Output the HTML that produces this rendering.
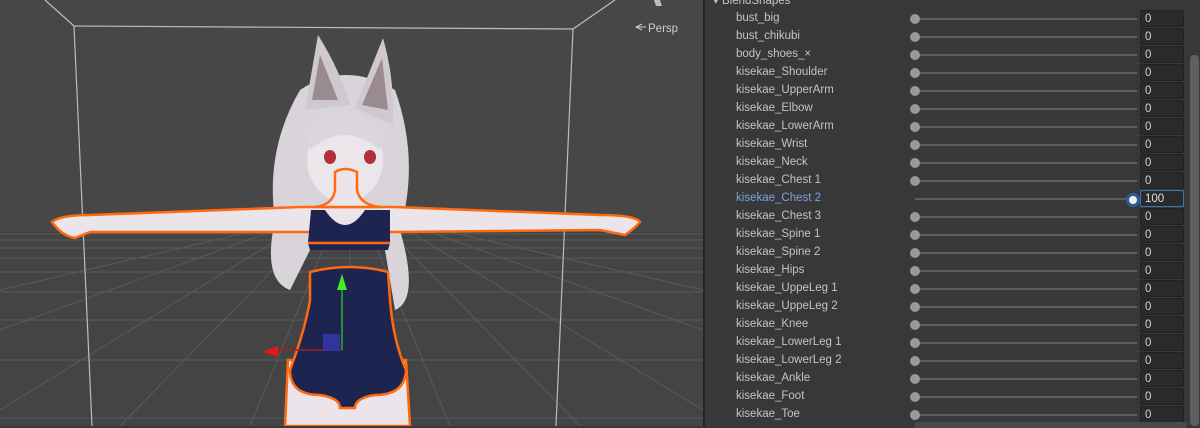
<!DOCTYPE html>
<html><head><meta charset="utf-8"><style>
body{margin:0;width:1200px;height:426px;overflow:hidden;background:#383838;font-family:"Liberation Sans","Noto Sans CJK JP",sans-serif;position:relative}
#vp{position:absolute;left:0;top:0;width:703px;height:426px}
#panel{position:absolute;left:703px;top:0;width:497px;height:426px;background:#383838;border-left:2px solid #232323}
.row{position:absolute;left:0;height:18px;width:497px;margin-top:1px}
.lbl{position:absolute;left:31px;top:2px;font-size:11.5px;color:#c4c4c4}
.trk{position:absolute;left:210px;width:222px;top:8px;height:2px;background:#5e5e5e}
.kn{position:absolute;left:205px;top:4px;width:10px;height:10px;border-radius:50%;background:#999}
.inp{position:absolute;left:435px;top:0px;width:44px;height:17px;background:#2a2a2a;border:1px solid #212121;border-radius:2px;color:#d2d2d2;font-size:11.5px;line-height:16px;padding-left:4px;box-sizing:border-box}
.sb{position:absolute;left:485px;top:55px;width:9px;height:371px;background:#5f5f5f;border-radius:4px}
</style></head><body>
<svg id="vp" viewBox="0 0 703 426" xmlns="http://www.w3.org/2000/svg">
<rect width="703" height="426" fill="#474747"/>
<rect y="232" width="703" height="194" fill="#444"/>
<g stroke="#5a5a5a" stroke-width="1">
<line x1="0" y1="234" x2="703" y2="234"/><line x1="0" y1="240" x2="703" y2="240"/><line x1="0" y1="248" x2="703" y2="248"/>
<line x1="0" y1="258" x2="703" y2="258"/><line x1="0" y1="272" x2="703" y2="272"/><line x1="0" y1="292" x2="703" y2="292"/>
<line x1="0" y1="320" x2="703" y2="320"/><line x1="0" y1="360" x2="703" y2="360"/><line x1="0" y1="418" x2="703" y2="418"/>
<line x1="350" y1="232" x2="350" y2="426"/>
<line x1="330" y1="232" x2="250" y2="426"/><line x1="370" y1="232" x2="450" y2="426"/>
<line x1="310" y1="232" x2="120" y2="426"/><line x1="390" y1="232" x2="580" y2="426"/>
<line x1="290" y1="232" x2="0" y2="410"/><line x1="410" y1="232" x2="703" y2="410"/>
<line x1="270" y1="232" x2="0" y2="330"/><line x1="430" y1="232" x2="703" y2="330"/>
<line x1="250" y1="232" x2="0" y2="290"/><line x1="450" y1="232" x2="703" y2="290"/>
</g>
<g stroke="#bdbdbd" stroke-width="1.2" fill="none">
<polyline points="45,0 74,26 573,29 615,0"/>
<line x1="74" y1="26" x2="92" y2="426"/><line x1="573" y1="29" x2="556" y2="426"/>
</g>
<path d="M300,90 Q345,60 395,90 Q420,160 400,230 Q420,300 395,310 L385,250 L310,250 L290,290 Q262,280 275,220 Q265,150 300,90Z" fill="#d9d4da"/>
<path d="M305,110 L318,35 Q340,70 350,105Z" fill="#cfc9cf"/>
<path d="M355,108 L383,38 Q395,80 393,125Z" fill="#cfc9cf"/>
<path d="M312,100 L320,55 L338,100Z" fill="#9a8b90"/>
<path d="M362,105 L382,58 L388,110Z" fill="#9a8b90"/>
<ellipse cx="345" cy="160" rx="38" ry="42" fill="#ebe6ea"/>
<path d="M305,130 Q345,95 385,130 L380,150 Q345,120 310,150Z" fill="#dcd6dc"/>
<ellipse cx="330" cy="157" rx="6" ry="7" fill="#b0303c"/><ellipse cx="370" cy="157" rx="6" ry="7" fill="#b0303c"/>
<path d="M52,222 Q60,215 90,215 L300,207 L395,207 L600,215 Q635,215 640,222 Q635,228 625,235 L600,230 L395,232 L310,232 L90,232 L75,238 Q62,236 52,222Z" fill="#ebe4ea" stroke="#ff6a10" stroke-width="2.5"/>
<path d="M335,172 Q345,166 357,172 L357,190 Q360,205 380,207 L315,207 Q333,205 335,190Z" fill="#ebe4ea" stroke="#ff6a10" stroke-width="2.5"/>
<path d="M288,360 L285,426 L410,426 L406,360Z" fill="#ebe4ea" stroke="#ff6a10" stroke-width="2.5"/>
<path d="M311,210 L325,210 Q345,240 365,210 L390,210 L390,243 L308,243Z" fill="#1e2450"/>
<path d="M310,250 L308,243 L390,243 L388,250 L311,250Z" fill="#1e2450"/>
<path d="M310,272 Q350,262 388,272 L390,300 Q393,340 406,370 Q405,395 375,395 Q355,398 355,408 L340,408 Q340,398 320,395 Q290,395 290,370 Q305,330 310,300Z" fill="#1e2450" stroke="#ff6a10" stroke-width="2.5"/>
<line x1="308" y1="243" x2="390" y2="243" stroke="#ff6a10" stroke-width="2.5"/>
<line x1="342" y1="280" x2="342" y2="350" stroke="#30b030" stroke-width="1.5"/>
<polygon points="342,274 337,290 347,290" fill="#44ee22"/>
<line x1="275" y1="350" x2="342" y2="350" stroke="#a02020" stroke-width="1.5"/>
<polygon points="262,352 278,346 278,357" fill="#dd1a1a"/>
<rect x="323" y="334" width="17" height="17" fill="#3333a0"/>
<text x="648" y="32" fill="#cfcfcf" font-size="11.5" font-family="Liberation Sans, sans-serif">Persp</text>
<path d="M642,24 L636,27 L642,30 M636,27 L646,27" stroke="#cfcfcf" fill="none"/>
<path d="M654,0 L656,6 L662,6 L660,0Z" fill="#bbb"/>
</svg>
<div id="panel">
<div style="position:absolute;left:8px;top:-7px;font-size:11.5px;color:#c4c4c4">▾ BlendShapes</div>
<div class="sb"></div>
<div class="row" style="top:9px"><span class="lbl">bust_big</span><div class="trk"></div><div class="kn"></div><div class="inp">0</div></div>
<div class="row" style="top:27px"><span class="lbl">bust_chikubi</span><div class="trk"></div><div class="kn"></div><div class="inp">0</div></div>
<div class="row" style="top:45px"><span class="lbl">body_shoes_×</span><div class="trk"></div><div class="kn"></div><div class="inp">0</div></div>
<div class="row" style="top:63px"><span class="lbl">kisekae_Shoulder</span><div class="trk"></div><div class="kn"></div><div class="inp">0</div></div>
<div class="row" style="top:81px"><span class="lbl">kisekae_UpperArm</span><div class="trk"></div><div class="kn"></div><div class="inp">0</div></div>
<div class="row" style="top:99px"><span class="lbl">kisekae_Elbow</span><div class="trk"></div><div class="kn"></div><div class="inp">0</div></div>
<div class="row" style="top:117px"><span class="lbl">kisekae_LowerArm</span><div class="trk"></div><div class="kn"></div><div class="inp">0</div></div>
<div class="row" style="top:135px"><span class="lbl">kisekae_Wrist</span><div class="trk"></div><div class="kn"></div><div class="inp">0</div></div>
<div class="row" style="top:153px"><span class="lbl">kisekae_Neck</span><div class="trk"></div><div class="kn"></div><div class="inp">0</div></div>
<div class="row" style="top:171px"><span class="lbl">kisekae_Chest 1</span><div class="trk"></div><div class="kn"></div><div class="inp">0</div></div>
<div class="row" style="top:189px"><span class="lbl" style="color:#7ca3e0">kisekae_Chest 2</span><div class="trk"></div><div class="kn" style="left:421px;top:3px;width:8px;height:8px;background:#eee;border:3px solid #2c5d9a"></div><div class="inp" style="border-color:#3a79bb;color:#e0e0e0">100</div></div>
<div class="row" style="top:207px"><span class="lbl">kisekae_Chest 3</span><div class="trk"></div><div class="kn"></div><div class="inp">0</div></div>
<div class="row" style="top:225px"><span class="lbl">kisekae_Spine 1</span><div class="trk"></div><div class="kn"></div><div class="inp">0</div></div>
<div class="row" style="top:243px"><span class="lbl">kisekae_Spine 2</span><div class="trk"></div><div class="kn"></div><div class="inp">0</div></div>
<div class="row" style="top:261px"><span class="lbl">kisekae_Hips</span><div class="trk"></div><div class="kn"></div><div class="inp">0</div></div>
<div class="row" style="top:279px"><span class="lbl">kisekae_UppeLeg 1</span><div class="trk"></div><div class="kn"></div><div class="inp">0</div></div>
<div class="row" style="top:297px"><span class="lbl">kisekae_UppeLeg 2</span><div class="trk"></div><div class="kn"></div><div class="inp">0</div></div>
<div class="row" style="top:315px"><span class="lbl">kisekae_Knee</span><div class="trk"></div><div class="kn"></div><div class="inp">0</div></div>
<div class="row" style="top:333px"><span class="lbl">kisekae_LowerLeg 1</span><div class="trk"></div><div class="kn"></div><div class="inp">0</div></div>
<div class="row" style="top:351px"><span class="lbl">kisekae_LowerLeg 2</span><div class="trk"></div><div class="kn"></div><div class="inp">0</div></div>
<div class="row" style="top:369px"><span class="lbl">kisekae_Ankle</span><div class="trk"></div><div class="kn"></div><div class="inp">0</div></div>
<div class="row" style="top:387px"><span class="lbl">kisekae_Foot</span><div class="trk"></div><div class="kn"></div><div class="inp">0</div></div>
<div class="row" style="top:405px"><span class="lbl">kisekae_Toe</span><div class="trk"></div><div class="kn"></div><div class="inp">0</div></div>
<div style="position:absolute;left:210px;top:422px;width:272px;height:6px;background:#4a4a4a;border-radius:2px"></div>
</div>
</body></html>
